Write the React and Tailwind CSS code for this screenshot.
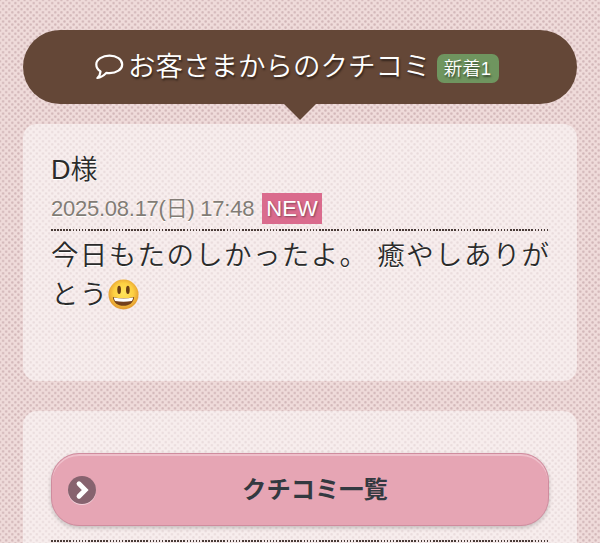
import React from "react";

const SpeechBubble = () => (
  <svg viewBox="0 0 29 26" className="w-[29px] h-[26px] shrink-0" fill="none">
    <path
      d="M14.5 1.7C21.5 1.7 27.2 5.4 27.2 10.4S21.5 19.1 14.5 19.1c-1 0-2-.1-3-.3C8.8 21.5 6 23.5 2.4 24c1.7-1.5 2.9-3.4 3.1-6.7C3.1 15.7 1.3 13.3 1.3 10.4 1.3 5.4 7.5 1.7 14.5 1.7Z"
      stroke="#fff"
      strokeWidth="2.2"
      strokeLinejoin="round"
    />
  </svg>
);

const Smiley = () => (
  <svg viewBox="0 0 32 32" className="-ml-px w-[31px] h-[31px] shrink-0">
    <defs>
      <radialGradient id="face" cx="50%" cy="45%" r="54%">
        <stop offset="0" stopColor="#ffe45c" />
        <stop offset="0.6" stopColor="#fdd042" />
        <stop offset="1" stopColor="#e39a30" />
      </radialGradient>
    </defs>
    <circle cx="16" cy="16" r="15.5" fill="url(#face)" />
    <ellipse cx="11.5" cy="11.2" rx="1.9" ry="4.3" fill="#6a3d14" />
    <ellipse cx="20.5" cy="11.2" rx="1.9" ry="4.3" fill="#6a3d14" />
    <path d="M5 18.5c7 1.8 15 1.8 22 0-.6 6-5 9.2-11 9.2S5.6 24.5 5 18.5Z" fill="#74401c" />
    <path d="M6 19c6.5 1.6 13.5 1.6 20 0-.2 1.6-.8 2.9-1.5 3.8-5.6 1-11.4 1-17 0C6.8 21.9 6.2 20.6 6 19Z" fill="#fff" />
  </svg>
);

const ArrowBadge = () => (
  <span className="flex h-7 w-7 items-center justify-center rounded-full bg-[#87636f] shadow-[0_1px_0_#f3d2db]">
    <svg viewBox="0 0 28 28" className="h-7 w-7" fill="none">
      <path
        d="M11 7.8 17.2 14 11 20.2"
        stroke="#fff"
        strokeWidth="4.8"
        strokeLinecap="round"
      />
    </svg>
  </span>
);

const DottedLine = () => (
  <div className="h-[2px] bg-[repeating-linear-gradient(90deg,#4a3c38_0_1.6px,transparent_1.6px_3.08px)]" />
);

const Heading = () => (
  <header className="flex flex-col items-center">
    <div className="flex h-[74px] w-full items-center rounded-full bg-[#644737] pl-[72px] text-white [text-shadow:1px_2px_2px_rgba(0,0,0,0.5)]">
      <SpeechBubble />
      <h1 className="ml-1 text-[27.5px] font-[350] leading-none whitespace-nowrap">
        お客さまからのクチコミ
      </h1>
      <span className="ml-[6px] mt-[3px] flex h-[29px] w-[62px] items-center justify-center rounded-[7px] bg-[#6f955f] pt-px text-[18.5px] font-[350] leading-none">
        新着1
      </span>
    </div>
    <div className="h-4 w-8 bg-[#644737] [clip-path:polygon(0_0,100%_0,50%_100%)]" />
  </header>
);

const Review = () => (
  <section className="mt-1 h-[257px] rounded-[14px] bg-white/50 px-7 pt-[28px] text-[#2b2b2b] [text-shadow:0_1px_0_#fff]">
    <h2 className="h-9 text-[27px] font-[350] leading-9">D様</h2>
    <div className="mt-[5px] flex h-[31px] items-center">
      <time className="w-[211px] text-[22px] font-[350] tracking-[-0.25px] text-[#827c75] whitespace-nowrap">
        2025.08.17(日) 17:48
      </time>
      <span className="flex h-[31px] w-[60px] items-center justify-center bg-[#da6b8d] text-[22px] text-white [text-shadow:1px_1px_2px_rgba(0,0,0,0.4)]">
        NEW
      </span>
    </div>
    <div className="mt-[5px]">
      <DottedLine />
    </div>
    <div className="pt-[5px] text-[27.5px] font-[350] leading-[39px] tracking-[1.35px] whitespace-nowrap">
      <p>今日もたのしかったよ。 癒やしありが</p>
      <p className="flex items-center">
        とう
        <Smiley />
      </p>
    </div>
  </section>
);

const App = () => {
  return (
    <main className="h-[543px] w-[600px] overflow-hidden bg-[#efdbda] bg-[radial-gradient(circle,#d1b5b7_0.7px,transparent_1.6px),radial-gradient(circle,#d1b5b7_0.7px,transparent_1.6px)] bg-[size:6.15px_6.15px] bg-[position:0_0,3.075px_3.075px] px-[23px] pt-[30px] font-['Liberation_Sans','Noto_Sans_CJK_JP',sans-serif]">
      <Heading />
      <Review />
      <section className="mt-[30px] h-40 rounded-[14px] bg-white/50 px-7 pt-[42px]">
        <button className="flex h-[73px] w-full items-center rounded-[28px] border border-[#cf8c9e] bg-[#e6a5b4] pl-4 shadow-[inset_0_2px_0_#efc0cb,0_2px_4px_rgba(0,0,0,0.2)]">
          <ArrowBadge />
          <span className="grow pr-[14px] pt-[2px] text-center text-[24.3px] font-bold text-[#333940]">
            クチコミ一覧
          </span>
        </button>
        <div className="mt-[14px]">
          <DottedLine />
        </div>
      </section>
    </main>
  );
};

export default App;
